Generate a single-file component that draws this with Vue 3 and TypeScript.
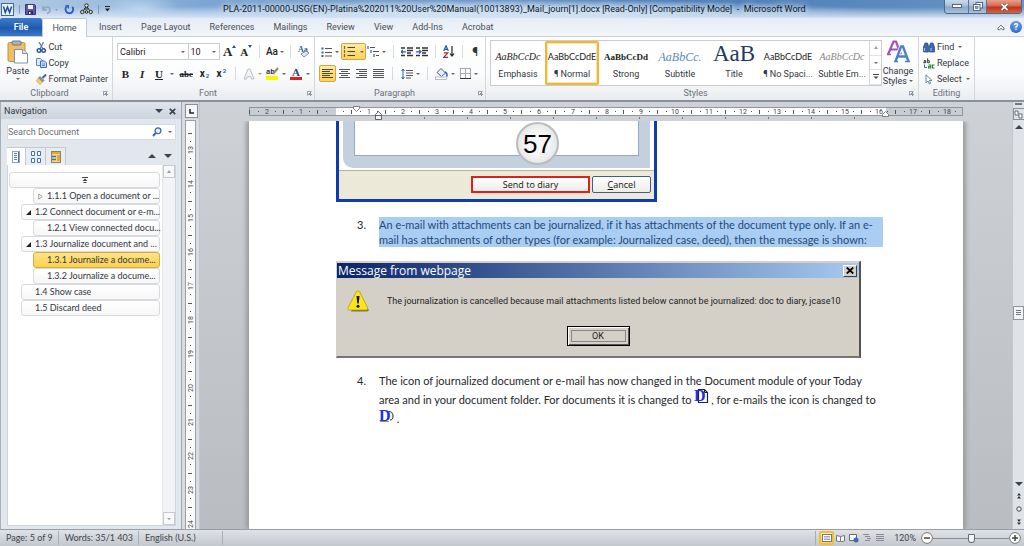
<script setup lang="ts">
import { ref } from 'vue'

interface StyleItem { name: string; sample: string; cls: string }
interface NavItem { text: string; level: number; mark: string }

const tabs: string[] = ['Insert', 'Page Layout', 'References', 'Mailings', 'Review', 'View', 'Add-Ins', 'Acrobat']

const styles: StyleItem[] = [
  { name: 'Emphasis', sample: 'AaBbCcDc', cls: 's-em' },
  { name: '¶ Normal', sample: 'AaBbCcDdE', cls: 's-normal' },
  { name: 'Strong', sample: 'AaBbCcDd', cls: 's-strong' },
  { name: 'Subtitle', sample: 'AaBbCc.', cls: 's-sub' },
  { name: 'Title', sample: 'AaB', cls: 's-title' },
  { name: '¶ No Spaci...', sample: 'AaBbCcDdE', cls: 's-normal' },
  { name: 'Subtle Em...', sample: 'AaBbCcDc', cls: 's-subtle' },
]

const nav: NavItem[] = [
  { text: '1.1.1 Open a document or ...', level: 2, mark: 'closed' },
  { text: '1.2 Connect document or e-m...', level: 1, mark: 'open' },
  { text: '1.2.1 View connected docu...', level: 2, mark: '' },
  { text: '1.3 Journalize document and ...', level: 1, mark: 'open' },
  { text: '1.3.1 Journalize a docume...', level: 2, mark: '' },
  { text: '1.3.2 Journalize a docume...', level: 2, mark: '' },
  { text: '1.4 Show case', level: 1, mark: '' },
  { text: '1.5 Discard deed', level: 1, mark: '' },
]

const current = ref('1.3.1 Journalize a docume...')
const activeStyle = ref('¶ Normal')
const zoomLevel = ref(50)
const search = ref('')

const unit = 34
const origin = 86
const hMarks: number[] = Array.from({ length: 22 }, (_, i) => i - 3)
const vMarks: number[] = Array.from({ length: 12 }, (_, i) => i + 13)
</script>

<template>
  <div class="word">
    <header class="titlebar">
      <div class="quick">
        <svg width="13" height="13" viewBox="0 0 13 13" aria-hidden="true">
          <rect x=".5" y=".5" width="12" height="12" fill="#e9f1fb" stroke="#3a67a8" />
          <path d="M2.5 3.5 4.3 9.5 6.5 4 8.6 9.5 10.6 3.5" fill="none" stroke="#1c4f9c" stroke-width="1.5" />
        </svg>
        <i class="qsep"></i>
        <button type="button" aria-label="Save">
          <svg width="11" height="11" viewBox="0 0 11 11"><path d="M.5.5h9l1 1v9H.5z" fill="#5b55b8" stroke="#3a3787" /><rect x="3" y="1" width="5" height="4" fill="#f2f4fc" /><rect x="3" y="7" width="5" height="3.5" fill="#2f2d63" /><rect x="4" y="8" width="1.5" height="2" fill="#fff" /></svg>
        </button>
        <button type="button" aria-label="Undo" class="undo">
          <svg width="16" height="11" viewBox="0 0 16 11"><path d="M1 2v4h4M1.5 5.5C3 2.500 8 2 8 5.500 8 7.500 6.500 9 5 9.500" fill="none" stroke="#93a5bd" stroke-width="1.600" /><path d="M13 5h3l-1.500 2z" fill="#8a9cb6" /></svg>
        </button>
        <button type="button" aria-label="Repeat">
          <svg width="11" height="11" viewBox="0 0 11 11"><path d="M2.500 2.500C.5 5 2 9.300 5.500 9.300S10 5 8.300 2.800" fill="none" stroke="#2c62c4" stroke-width="1.900" /><path d="M1 1h4v4z" fill="#2c62c4" /></svg>
        </button>
        <button type="button" aria-label="Hierarchy">
          <svg width="13" height="12" viewBox="0 0 13 12"><path d="M6.500 3 3 8M6.500 3 10 8M4.500 6H8" fill="none" stroke="#222" /><circle cx="6.500" cy="2.500" r="1.700" fill="#e8f0d8" stroke="#222" /><circle cx="2.300" cy="9" r="1.700" fill="#dbe8c8" stroke="#222" /><circle cx="6.500" cy="9" r="1.300" fill="#dbe8c8" stroke="#222" /><circle cx="10.700" cy="9" r="1.700" fill="#dbe8c8" stroke="#222" /></svg>
        </button>
        <i class="qsep"></i>
        <button type="button" aria-label="Customize toolbar">
          <svg width="7" height="6" viewBox="0 0 7 6"><path d="M1 .5h5" stroke="#222" /><path d="M1 2.500h5L3.500 5.500z" fill="#222" /></svg>
        </button>
      </div>
      <h1>PLA-2011-00000-USG(EN)-Platina%202011%20User%20Manual(10013893)_Mail_journ[1].docx [Read-Only] [Compatibility Mode]&nbsp; -&nbsp; Microsoft Word</h1>
      <div class="winctl">
        <button type="button" aria-label="Minimize"><svg width="10" height="5" viewBox="0 0 10 5"><rect x=".5" y=".5" width="9" height="3" fill="#fff" stroke="#56657a" /></svg></button>
        <button type="button" aria-label="Restore" class="restore"><svg width="10" height="9" viewBox="0 0 10 9"><rect x="3" y=".5" width="6.500" height="5.500" fill="#fff" stroke="#56657a" /><rect x=".5" y="2.500" width="6.500" height="6" fill="#fff" stroke="#56657a" /><rect x="2.500" y="4.500" width="2.500" height="2" fill="#8ea3bd" stroke="#56657a" stroke-width=".6" /></svg></button>
        <button type="button" aria-label="Close" class="close"><svg width="9" height="8" viewBox="0 0 9 8"><path d="M1.500 1 7.500 7M7.500 1 1.500 7" stroke="#5a3433" stroke-width="3" /><path d="M1.500 1 7.500 7M7.500 1 1.500 7" stroke="#fff" stroke-width="1.800" /></svg></button>
      </div>
    </header>

    <nav class="tabs">
      <button type="button" class="file">File</button>
      <button type="button" class="home">Home</button>
      <div class="rest"><button v-for="t in tabs" :key="t" type="button">{{ t }}</button></div>
      <div class="help">
        <button type="button" aria-label="Collapse ribbon"><svg width="8" height="7" viewBox="0 0 8 7"><path d="M1 4 4 1.200 7 4V5.700H5.500L4 4.400 2.500 5.700H1z" fill="#fff" stroke="#55606e" stroke-width=".9" /></svg></button>
        <button type="button" class="q" aria-label="Help">?</button>
      </div>
    </nav>

    <section class="ribbon">
      <div class="group clip">
        <div class="body">
          <button type="button" class="paste">
            <svg width="22" height="24" viewBox="0 0 22 24"><rect x="1" y="2.500" width="17" height="19" rx="1.500" fill="#f0bd62" stroke="#c98f35" /><rect x="5" y="1" width="9" height="4" rx="1" fill="#a9b2bf" stroke="#6f7886" /><path d="M7.500 9.500h8l5 4v9.500h-13z" fill="#fff" stroke="#7b93b4" /><path d="M15.500 9.500v4h5" fill="#dbe5f2" stroke="#7b93b4" /></svg>
            <span>Paste</span>
            <i class="caret"></i>
          </button>
          <div class="clist">
            <button type="button"><svg width="11" height="11" viewBox="0 0 11 11"><path d="M3 0 7 7M7.500 0 4 7" stroke="#5f7fae" stroke-width="1.300" /><circle cx="3" cy="8.500" r="1.800" fill="none" stroke="#2454a0" stroke-width="1.400" /><circle cx="7.600" cy="8.500" r="1.800" fill="none" stroke="#2454a0" stroke-width="1.400" /></svg>Cut</button>
            <button type="button"><svg width="11" height="10" viewBox="0 0 11 10"><path d="M.5.5h4l2 2v5h-6z" fill="#dce9fb" stroke="#5b86c8" /><path d="M4.500 3h4l2 2v4.500h-6z" fill="#c3dafa" stroke="#3d6dba" /><path d="M6 6h3M6 7.500h3" stroke="#3d6dba" stroke-width=".7" /></svg>Copy</button>
            <button type="button"><svg width="11" height="11" viewBox="0 0 11 11"><path d="M10 .5 6.500 4" stroke="#4a5f86" stroke-width="2" /><path d="M4 2.500 8 6.500 6.500 8 2.500 4z" fill="#7693c4" stroke="#44598a" stroke-width=".6" /><path d="M2.500 4 6.500 8 4 10.500.5 7z" fill="#f6d163" stroke="#b78f2e" stroke-width=".6" /></svg>Format Painter</button>
          </div>
        </div>
        <div class="label"><span>Clipboard</span><i class="launch"></i></div>
      </div>

      <div class="group font">
        <div class="body rows">
          <div class="row">
            <span class="combo c1"><select aria-label="Font"><option>Calibri</option></select><i class="caret"></i></span>
            <span class="combo c2"><select aria-label="Font size"><option>10</option></select><i class="caret"></i></span>
            <button type="button" class="w17 ser big" aria-label="Grow font">A<svg width="4" height="8" viewBox="0 0 4 8"><path d="M0 3 2 0l2 3z" fill="#2d4f8e" /></svg></button>
            <button type="button" class="w17 ser mid" aria-label="Shrink font">A<svg width="4" height="8" viewBox="0 0 4 8"><path d="M0 0h4L2 3z" fill="#2d4f8e" /></svg></button>
            <i class="sep"></i>
            <button type="button" class="w21 aa">Aa<i class="caret"></i></button>
            <i class="sep"></i>
            <button type="button" class="w17" aria-label="Clear formatting"><svg width="13" height="13" viewBox="0 0 13 13"><text x="1" y="7" font-size="8" font-weight="bold" font-family="Liberation Serif, serif" fill="#3a5f96">Aa</text><path d="m4 9 5-3 3 2-5 4z" fill="#e3e8f5" stroke="#6f7fae" stroke-width=".9" /></svg></button>
          </div>
          <div class="row">
            <button type="button" class="w17 ser"><b>B</b></button>
            <button type="button" class="w17 ser"><b><em>I</em></b></button>
            <button type="button" class="w17 ser"><b><u>U</u></b></button>
            <button type="button" class="w9" aria-label="Underline style"><i class="caret"></i></button>
            <button type="button" class="w21 ser small"><b><s>abc</s></b></button>
            <button type="button" class="w17 script"><b>x</b><small class="lo">2</small></button>
            <button type="button" class="w17 script"><b>x</b><small class="hi">2</small></button>
            <i class="sep"></i>
            <button type="button" class="fx" aria-label="Text effects"><svg width="12" height="12" viewBox="0 0 12 12"><path d="M1 11 5 1h2l4 10H8.500l-.8-2.300H4.300L3.500 11z" fill="#f3f4f6" stroke="#b9bec6" /></svg><i class="caret dim"></i></button>
            <button type="button" class="fx" aria-label="Highlight"><svg width="13" height="13" viewBox="0 0 13 13"><text x="0" y="7" font-size="7" font-weight="bold" font-family="Open Sans, sans-serif" fill="#333">ab</text><path d="M12 1 7 7" stroke="#8b8f77" stroke-width="2" /><rect x="0" y="9" width="12" height="4" fill="#fbf500" /></svg><i class="caret"></i></button>
            <button type="button" class="fx" aria-label="Font color"><svg width="13" height="13" viewBox="0 0 13 13"><text x="2" y="9" font-size="11" font-weight="bold" font-family="Liberation Serif, serif" fill="#2c4a86">A</text><rect x="0" y="10" width="12" height="3" fill="#ea1c1c" /></svg><i class="caret"></i></button>
          </div>
        </div>
        <div class="label"><span>Font</span><i class="launch"></i></div>
      </div>

      <div class="group para">
        <div class="body rows">
          <div class="row">
            <button type="button" class="fx" aria-label="Bullets"><svg width="11" height="10" viewBox="0 0 11 10"><path d="M4 1.500h7M4 5.500h7M4 9h7" stroke="#555" /><path d="M.5 1.500h2M.5 5.500h2M.5 9h2" stroke="#2d5fae" stroke-width="1.800" /></svg><i class="caret red"></i></button>
            <button type="button" class="on split" aria-label="Numbering"><svg width="12" height="11" viewBox="0 0 12 11"><path d="M4.500 1.500H12M4.500 5.500H12M4.500 9.500H12" stroke="#444" stroke-width="1.200" /><path d="M1.500 0v3M1.500 4v3M1.500 8v3" stroke="#7a6a3a" stroke-width="1.200" /></svg><i class="caret"></i></button>
            <button type="button" class="fx" aria-label="Multilevel list"><svg width="12" height="12" viewBox="0 0 12 12"><path d="M3 1.500h5M6 5.500h6M9 9.500h3" stroke="#555" /><path d="M1 0v3M4 4v3M7 8v3" stroke="#2d5fae" stroke-width="1.200" /></svg><i class="caret"></i></button>
            <i class="sep"></i>
            <button type="button" class="w17" aria-label="Decrease indent"><svg width="12" height="10" viewBox="0 0 12 10"><path d="M0 1h4M6 1h6M6 3.500h6M6 6h4M0 8.500h4M6 8.500h6" stroke="#333" stroke-width="1.300" /><path d="M0 4.800h5M2 3 0 4.800l2 1.800" fill="none" stroke="#2d5fae" stroke-width="1.200" /></svg></button>
            <button type="button" class="w17" aria-label="Increase indent"><svg width="12" height="10" viewBox="0 0 12 10"><path d="M0 1h4M6 1h6M6 3.500h6M6 6h4M0 8.500h4M6 8.500h6" stroke="#333" stroke-width="1.300" /><path d="M0 4.800h5M3 3l2 1.800-2 1.800" fill="none" stroke="#2d5fae" stroke-width="1.200" /></svg></button>
            <i class="sep"></i>
            <button type="button" class="w17" aria-label="Sort"><svg width="12" height="13" viewBox="0 0 12 13"><path d="M.7 6 3 .8 5.300 6M1.500 4.300h3" fill="none" stroke="#2d4fae" stroke-width="1.200" /><path d="M.8 7.800h4L.8 12.300h4.300" fill="none" stroke="#a52a44" stroke-width="1.200" /><path d="M9 1v10M7 8.500 9 11l2-2.500" fill="none" stroke="#222" stroke-width="1.200" /></svg></button>
            <i class="sep"></i>
            <button type="button" class="w17 pil">¶</button>
          </div>
          <div class="row">
            <button type="button" class="on al" aria-label="Align left"><svg width="11" height="10" viewBox="0 0 11 10"><path d="M0 .5h11M0 2.500h8M0 4.500h11M0 6.500h8M0 8.500h11" stroke="#4d4630" stroke-width="1.200" /></svg></button>
            <button type="button" class="w17" aria-label="Center"><svg width="11" height="10" viewBox="0 0 11 10"><path d="M0 .5h11M2 2.500h7M0 4.500h11M2 6.500h7M0 8.500h11" stroke="#555" /></svg></button>
            <button type="button" class="w17" aria-label="Align right"><svg width="11" height="10" viewBox="0 0 11 10"><path d="M0 .5h11M3 2.500h8M0 4.500h11M3 6.500h8M0 8.500h11" stroke="#555" /></svg></button>
            <button type="button" class="w17" aria-label="Justify"><svg width="11" height="10" viewBox="0 0 11 10"><path d="M0 .5h11M0 2.500h11M0 4.500h11M0 6.500h11M0 8.500h11" stroke="#555" /></svg></button>
            <i class="sep"></i>
            <button type="button" class="fx" aria-label="Line spacing"><svg width="12" height="12" viewBox="0 0 12 12"><path d="M5 2.500h7M5 5h7M5 7.500h7M5 10h5" stroke="#555" /><path d="M2 1v10M.5 3 2 1l1.500 2M.5 9 2 11l1.500-2" fill="none" stroke="#2d5fae" /></svg><i class="caret"></i></button>
            <i class="sep"></i>
            <button type="button" class="fx" aria-label="Shading"><svg width="13" height="13" viewBox="0 0 13 13"><path d="M2 5.500 6 1.500l4.500 4.500-4 3.500z" fill="#e6edf8" stroke="#49628d" /><path d="M10 5c2 1 2.500 3 1.500 4.500" fill="none" stroke="#2d5fae" stroke-width="1.500" /><rect x=".5" y="10" width="11" height="2.500" fill="#fff" stroke="#aab" stroke-width=".8" /></svg><i class="caret"></i></button>
            <button type="button" class="fx" aria-label="Borders"><svg width="11" height="11" viewBox="0 0 11 11"><path d="M.5 0v11M5.500 0v11M10.500 0v11M0 .5h11M0 5.500h11" stroke="#a5a9b0" /><path d="M0 10.500h11" stroke="#333" /></svg><i class="caret"></i></button>
          </div>
        </div>
        <div class="label"><span>Paragraph</span><i class="launch"></i></div>
      </div>

      <div class="group sty">
        <div class="body">
          <div class="gallery">
            <button v-for="s in styles" :key="s.name" type="button" :class="{ active: s.name === activeStyle }" @click="activeStyle = s.name">
              <span class="sample" :class="s.cls">{{ s.sample }}</span>
              <span class="sname">{{ s.name }}</span>
            </button>
            <div class="gscroll">
              <button type="button" aria-label="Previous styles"><i class="caret up dim"></i></button>
              <button type="button" aria-label="Next styles"><i class="caret"></i></button>
              <button type="button" aria-label="More styles"><svg width="6" height="6" viewBox="0 0 6 6"><path d="M0 .5h6" stroke="#444" /><path d="M.5 2.500h5L3 5z" fill="#444" /></svg></button>
            </div>
          </div>
          <button type="button" class="change">
            <svg width="23" height="23" viewBox="0 0 23 23"><path d="M1 14.500 6.500 1.500h2.500l5 13M4 9.500h7.500" fill="none" stroke="#a64fb8" stroke-width="2.200" /><path d="M0 14.500h4M10 14.500h3" stroke="#a64fb8" stroke-width="1.400" /><path d="M8.500 21.500 14 6.500h2l5.500 15M11 16.500h8" fill="none" stroke="#fff" stroke-width="4" /><path d="M8.500 21.500 14 6.500h2l5.500 15M11 16.500h8" fill="none" stroke="#4a82cc" stroke-width="2.400" /><path d="M7 21.500h4M18 21.500h5" stroke="#4a82cc" stroke-width="1.500" /></svg>
            <span>Change</span>
            <span>Styles <i class="caret"></i></span>
          </button>
        </div>
        <div class="label"><span>Styles</span><i class="launch"></i></div>
      </div>

      <div class="group edit">
        <div class="body">
          <div class="clist">
            <button type="button"><svg width="12" height="11" viewBox="0 0 12 11"><path d="M2 1h2.500l1 3v6H.5V5zM7.500 1H10l1.500 4v5h-5V4z" fill="#3b68b0" stroke="#234580" stroke-width=".7" /><path d="M1.500 6v3M8 6v3" stroke="#a9c8f2" /></svg>Find<i class="caret"></i></button>
            <button type="button"><svg width="12" height="11" viewBox="0 0 12 11"><path d="M.8 2.600h2v2.200h-2V3.800h2M4.600.3v4.500h1.700V2.600H4.600" fill="none" stroke="#333" stroke-width=".9" /><path d="M5.500 7h2.300v3H5.500V8.500h2.300M11.500 7H9.500v3h2" fill="none" stroke="#2a8a2a" stroke-width="1.100" /><path d="M1.500 6.500v3h2.500" fill="none" stroke="#3b68b0" /></svg>Replace</button>
            <button type="button"><svg width="12" height="11" viewBox="0 0 12 11"><path d="M3 .8v8l2-1.800 1.300 3 1.300-.6L6.400 6.500H9z" fill="#fff" stroke="#5a78a8" stroke-width=".9" /></svg>Select<i class="caret"></i></button>
          </div>
        </div>
        <div class="label"><span>Editing</span></div>
      </div>
    </section>

    <main class="work">
      <aside class="pane">
        <div class="phead"><h2>Navigation</h2><button type="button" aria-label="Pane options"><i class="tri down"></i></button><button type="button" aria-label="Close pane"><svg width="7" height="7" viewBox="0 0 7 7"><path d="m.8.8 5.400 5.400M6.200.8.8 6.200" stroke="#3c434c" stroke-width="1.700" /></svg></button></div>
        <label class="search">
          <input v-model="search" type="text" placeholder="Search Document" aria-label="Search Document">
          <svg width="10" height="10" viewBox="0 0 10 10"><circle cx="6" cy="3.800" r="2.900" fill="#e4effc" stroke="#3465ad" stroke-width="1.300" /><path d="M3.800 6 1 9" stroke="#3465ad" stroke-width="1.900" /></svg>
          <i class="caret"></i>
        </label>
        <div class="ptabs">
          <button type="button" class="sel" aria-label="Headings"><svg width="8" height="12" viewBox="0 0 8 12"><rect x=".5" y=".5" width="7" height="11" fill="#fff" stroke="#8aa4c8" /><path d="M2 2.500h3M2 4.500h3M2 6.500h3M2 8.500h3" stroke="#5579ad" /><path d="M6.500 1v10" stroke="#5f6b7b" /></svg></button>
          <button type="button" aria-label="Pages"><svg width="10" height="12" viewBox="0 0 10 12"><path d="M.5.5h3v4h-3zM6.500.5h3v4h-3zM.5 7.500h3v4h-3zM6.500 7.500h3v4h-3z" fill="#fff" stroke="#4470b0" /></svg></button>
          <button type="button" aria-label="Results"><svg width="10" height="12" viewBox="0 0 10 12"><rect x=".5" y=".5" width="9" height="11" fill="#f7d98c" stroke="#8a8266" /><path d="M1 2h8" stroke="#e6a82a" stroke-width="2" /><path d="M1 5.500h4M1 8.500h4" stroke="#4470b0" stroke-width="1.500" /><rect x="6" y="4" width="3" height="6" fill="#e9a52c" /></svg></button>
          <span class="grow"></span>
          <button type="button" class="flat" aria-label="Previous heading"><i class="tri"></i></button>
          <button type="button" class="flat" aria-label="Next heading"><i class="tri down"></i></button>
        </div>
        <div class="plist">
          <div class="items">
            <button type="button" class="item top" aria-label="Jump to beginning"><svg width="6" height="6" viewBox="0 0 6 6"><path d="M0 .5h6M1.500 5.500h3" stroke="#444" /><path d="M3 1.500 5.500 4H.5z" fill="#444" /></svg></button>
            <button v-for="n in nav" :key="n.text" type="button" class="item" :class="['l' + n.level, { cur: n.text === current }]" @click="current = n.text">
              <span class="mark"><svg v-if="n.mark === 'closed'" width="5" height="7" viewBox="0 0 5 7"><path d="M.7.8 4.200 3.500.7 6.200z" fill="#fff" stroke="#888" stroke-width=".8" /></svg><svg v-if="n.mark === 'open'" width="5" height="5" viewBox="0 0 5 5"><path d="M5 0v5H0z" fill="#222" /></svg></span>
              <span>{{ n.text }}</span>
            </button>
          </div>
          <div class="pscroll"><i class="sb"><i class="caret up dim"></i></i><i class="sb"><i class="caret dim"></i></i></div>
        </div>
      </aside>

      <div class="vruler">
        <button type="button" class="tabsel" aria-label="Tab selector"><svg width="5" height="5" viewBox="0 0 5 5"><path d="M1 0v4h4" fill="none" stroke="#222" stroke-width="1.500" /></svg></button>
        <div class="vtrack">
          <svg width="9" height="408" viewBox="0 0 9 408" aria-hidden="true">
            <g v-for="m in vMarks" :key="m">
              <text :transform="`translate(7 ${(m - 13) * unit + 29}) rotate(-90)`" class="num" text-anchor="middle">{{ m }}</text>
              <path :d="`M4 ${(m - 13) * unit + 20.500}h1M4 ${(m - 13) * unit + 37.500}h1M2 ${(m - 13) * unit + 12.500}h4`" stroke="#555" />
            </g>
          </svg>
        </div>
      </div>

      <div class="canvas">
        <div class="hruler">
          <svg width="714" height="15" viewBox="0 0 714 15" aria-hidden="true">
            <rect x=".5" y="1.500" width="713" height="8" fill="#c8ccd3" stroke="#8f959f" />
            <rect x="87" y="2" width="550" height="7" fill="#fff" />
            <g v-for="m in hMarks" :key="m">
              <text v-if="m && m > -3" :x="m * unit + origin" y="8" class="num" text-anchor="middle">{{ Math.abs(m) }}</text>
              <path :d="`M${m * unit + origin + 8} 5.500h1M${m * unit + origin + 25} 5.500h1M${m * unit + origin + 16.500} 4v4`" stroke="#555" />
            </g>
            <path d="M175.500 11v2M218.500 11v2M261.500 11v2M304.500 11v2M347.500 11v2M390.500 11v2M433.500 11v2M476.500 11v2M519.500 11v2M562.500 11v2M605.500 11v2" stroke="#777" />
            <path d="M104.500.5h6v2l-3 3-3-3z" fill="#fff" stroke="#666" stroke-width=".8" />
            <path d="M126.500 13.500v-5l3-3 3 3v5zM126.500 9.500h6" fill="#f4f4f4" stroke="#444" stroke-width=".8" />
            <path d="M633.500 10.500v-2l3-3 3 3v2z" fill="#fff" stroke="#666" stroke-width=".8" />
          </svg>
        </div>
        <article class="page">
          <figure class="shot">
            <div class="frame"><div class="inner"></div><b class="badge">57</b></div>
            <div class="actions"><button type="button" class="send">Send to diary</button><button type="button" class="cancel"><u>C</u>ancel</button></div>
          </figure>

          <div class="step three">
            <span class="no">3.</span>
            <p><mark>An e-mail with attachments can be journalized, if it has attachments of the document type only. If an e-</mark><br><mark>mail has attachments of other types (for example: Journalized case, deed), then the message is shown:&nbsp;</mark></p>
          </div>

          <div class="msg">
            <div class="mtitle"><span>Message from webpage</span><button type="button" aria-label="Close message"><svg width="8" height="7" viewBox="0 0 8 7"><path d="m.8.5 6.400 6M7.200.5.8 6.500" stroke="#000" stroke-width="1.800" /></svg></button></div>
            <div class="mbody">
              <svg width="23" height="22" viewBox="0 0 23 22"><path d="M12.500 2.500 22 20.500l-2 1H4z" fill="#77745f" /><path d="M11 .8c.8 0 1.400.4 1.800 1.200l7.700 15.500c.6 1.400 0 2.500-1.500 2.500H2.500C1 20 .5 18.900 1.200 17.500L9.200 2C9.600 1.200 10.200.8 11 .8z" fill="#fbe417" stroke="#a8980c" stroke-width=".7" /><path d="M9.500 6h3l-.8 7.500h-1.400z" fill="#111" /><circle cx="11" cy="16.200" r="1.500" fill="#111" /></svg>
              <span>The journalization is cancelled because mail attachments listed below cannot be journalized: doc to diary, jcase10</span>
            </div>
            <div class="mfoot"><button type="button">OK</button></div>
          </div>

          <div class="step four">
            <span class="no">4.</span>
            <p>The icon of journalized document or e-mail has now changed in the Document module of your Today<br>area and in your document folder. For documents it is changed to <svg width="14" height="16" viewBox="0 0 14 16"><path d="M4.500 1.500h6l3 3v10h-9z" fill="#fff" stroke="#222" stroke-width="1.200" /><path d="M10.500 1.500v3h3" fill="none" stroke="#222" /><text x="0" y="13" class="dee">D</text></svg> , for e-mails the icon is changed to<br><svg width="15" height="14" viewBox="0 0 15 14"><path d="M9.500 2.500c3 0 4.500 2 4.500 4.500s-1 4-3 4" fill="none" stroke="#222" /><path d="M12 2.500 14 5M1 12.500h9" stroke="#777" stroke-width=".8" /><text x="0" y="12" class="dee">D</text></svg> .</p>
          </div>
        </article>
      </div>

      <div class="vscroll">
        <div class="vtop"><i class="splitbar"></i><button type="button" aria-label="View ruler"><svg width="9" height="9" viewBox="0 0 9 9"><path d="M1 1h3v3h4v4H5V5H1z" fill="#fff" stroke="#59616c" stroke-width=".9" /></svg></button><i class="tri"></i></div>
        <div class="thumb"><i></i><i></i><i></i></div>
        <div class="vbot"><i class="tri down"></i><svg width="6" height="6" viewBox="0 0 6 6"><path d="M3 0 5 2.500H1zM3 3l2 2.500H1z" fill="#333" /></svg><svg width="6" height="6" viewBox="0 0 6 6"><circle cx="3" cy="3" r="2.200" fill="#f4f6f8" stroke="#444" /></svg><svg width="6" height="6" viewBox="0 0 6 6"><path d="M3 3 5 .5H1zM3 6l2-2.500H1z" fill="#333" /></svg></div>
      </div>
    </main>

    <footer class="status">
      <span>Page: 5 of 9</span><span>Words: 35/1 403</span><span class="lang">English (U.S.)</span>
      <div class="right">
        <button type="button" class="on" aria-label="Print layout"><svg width="10" height="8" viewBox="0 0 10 8"><rect x=".5" y=".5" width="9" height="7" fill="#fff" stroke="#777" /><path d="M2 2.500h6M2 4h6M2 5.500h6" stroke="#8693a8" stroke-width=".8" /></svg></button>
        <button type="button" aria-label="Full screen reading"><svg width="9" height="8" viewBox="0 0 9 8"><path d="M.5 1.500 4.500 2.500l4-1v5.500l-4 .7-4-.7zM4.500 2.500V7.500" fill="#fff" stroke="#667" stroke-width=".9" /></svg></button>
        <button type="button" aria-label="Web layout"><svg width="10" height="9" viewBox="0 0 10 9"><path d="M.5.5h7v6h-7z" fill="#fff" stroke="#667" /><circle cx="7" cy="6" r="2.500" fill="#3d6cb0" /></svg></button>
        <button type="button" aria-label="Outline"><svg width="8" height="8" viewBox="0 0 8 8"><path d="M0 .5h6M2 2.500h5M4 4.500h4M2 6.500h5" stroke="#889" /></svg></button>
        <button type="button" aria-label="Draft"><svg width="8" height="8" viewBox="0 0 8 8"><path d="M0 .5h8M0 2.500h8M0 4.500h8M0 6.500h8" stroke="#889" /></svg></button>
        <span class="pct">120%</span>
        <button type="button" class="round" aria-label="Zoom out"><svg width="12" height="12" viewBox="0 0 12 12"><circle cx="6" cy="6" r="5.400" fill="#fff" stroke="#777" /><path d="M3 6h6" stroke="#444" stroke-width="1.500" /></svg></button>
        <input v-model="zoomLevel" type="range" min="0" max="100" aria-label="Zoom">
        <button type="button" class="round" aria-label="Zoom in"><svg width="12" height="12" viewBox="0 0 12 12"><circle cx="6" cy="6" r="5.400" fill="#fff" stroke="#777" /><path d="M3 6h6M6 3v6" stroke="#444" stroke-width="1.500" /></svg></button>
      </div>
    </footer>
  </div>
</template>

<style>
html, body, #app { height: 100%; }
body { margin: 0; overflow: hidden; }
</style>

<style scoped>
.word { height: 100%; display: flex; flex-direction: column; font: 9px/12px Roboto, "Open Sans", sans-serif; color: #33373d; background: #c9ccd1; overflow: hidden; }
.word * { box-sizing: border-box; }
button { border: 0; padding: 0; margin: 0; background: none; font: inherit; color: inherit; display: flex; align-items: center; justify-content: center; white-space: nowrap; }
svg { display: block; flex: none; overflow: hidden; }
i { font-style: normal; }
h1, h2, p, figure { margin: 0; font: inherit; }
.caret { width: 0; height: 0; border: 2px solid transparent; border-top: 2px solid #666; border-bottom: 0; flex: none; display: inline-block; vertical-align: 2px; }
.caret.up { border-top: 0; border-bottom: 3px solid #555; }
.caret.dim { border-top-color: #9aa0a8; }
.caret.up.dim { border-bottom-color: #9aa0a8; }
.tri { width: 0; height: 0; border: 4px solid transparent; border-bottom: 4px solid #3c434c; border-top: 0; }
.tri.down { border-top: 4px solid #3c434c; border-bottom: 0; }

.titlebar { height: 18px; flex: none; display: flex; align-items: center; position: relative; background: radial-gradient(ellipse 40px 14px at 140px 9px, rgba(196, 220, 244, .8), transparent), radial-gradient(ellipse 380px 12px at 50% 12px, rgba(214, 230, 247, .75) 30%, transparent), linear-gradient(to bottom, rgba(255, 255, 255, 0) 40%, rgba(226, 236, 247, .9)), linear-gradient(to right, #b4cbe4 0, #9dbcdc 110px, #7ba5d3 20%, #6c99ca 45%, #4b7db8 70%, #6a95c6 100%); }
.quick { display: flex; align-items: center; padding-left: 1px; gap: 5px; width: 223px; height: 15px; }
.undo { margin: 0 1px; }
.qsep { width: 1px; height: 9px; background: #7e9abc; }
h1 { flex: 1; font-size: 9px; line-height: 17px; color: #10151c; white-space: nowrap; text-shadow: 0 0 6px #e3eefa, 0 0 8px #e3eefa; }
.winctl { display: flex; align-self: flex-start; height: 14px; margin-right: 2px; border: 1px solid #4d6788; border-top: 0; border-radius: 0 0 4px 4px; overflow: hidden; }
.winctl button { width: 24px; border-right: 1px solid #5a7495; background: linear-gradient(#cbdaea, #a4bcd6 48%, #87a5c7 52%, #a9c2dc); }
.winctl .restore { width: 18px; }
.winctl .close { width: 34px; border: 0; background: linear-gradient(#e7a08e, #d5664c 48%, #bf3217 52%, #d4633f); }

.tabs { height: 19px; flex: none; display: flex; align-items: stretch; background: linear-gradient(#e4ecf6, #f3f6fa); border-bottom: 1px solid #c9ced6; color: #4a4f57; }
.file { width: 42px; color: #fff; font-weight: 600; background: linear-gradient(#3f7ac9, #2160b5 50%, #1d57a8 51%, #3a78cc); border-radius: 2px 2px 0 0; }
.home { width: 45px; background: #fff; border: 1px solid #c3c9d2; border-bottom: 0; border-radius: 2px 2px 0 0; margin-bottom: -1px; }
.rest { display: flex; gap: 19px; margin-left: 12px; flex: 1; }
.help { display: flex; align-items: center; gap: 5px; padding-right: 2px; }
.q { width: 12px; height: 12px; border-radius: 50%; background: radial-gradient(circle at 50% 30%, #6fa4ea, #1f5ec0); color: #fff; font-weight: 700; font-size: 9px; line-height: 12px; }

.ribbon { height: 65px; flex: none; display: flex; background: linear-gradient(#fff, #fbfcfd 60%, #e9ecf0); border-bottom: 2px solid #8b9098; }
.group { display: flex; flex-direction: column; border-right: 1px solid #d3d7dc; flex: none; padding: 2px 4px 0; }
.body { flex: 1; display: flex; }
.label { height: 13px; display: flex; align-items: center; color: #6a7079; padding-bottom: 1px; }
.label span { flex: 1; text-align: center; padding-right: 8px; }
.edit .label span { padding: 0; }
.launch { width: 5px; height: 5px; border: 1px solid #9aa0a8; border-right-color: transparent; border-bottom-color: transparent; background: linear-gradient(135deg, transparent 50%, #8d939b 50%); }
.clip { width: 113px; } .font { width: 202px; padding-right: 2px; } .para { width: 171px; padding-right: 2px; } .sty { width: 433px; } .edit { width: 56px; }
.paste { flex-direction: column; justify-content: flex-start; width: 29px; gap: 2px; padding-top: 1px; margin-right: 4px; }
.paste span { line-height: 10px; }
.clist { display: flex; flex-direction: column; }
.clist button { height: 16px; gap: 2px; justify-content: flex-start; }
.clist .caret { margin-left: 2px; }
.rows { flex-direction: column; padding-top: 4px; gap: 5px; }
.row { display: flex; align-items: center; height: 17px; }
.combo { position: relative; display: flex; align-items: center; height: 17px; border: 1px solid #c9cdd3; background: #fff; padding-right: 3px; }
.combo select { appearance: none; border: 0; background: none; font: inherit; font-size: 9px; padding: 0 0 0 2px; color: #222; flex: 1; min-width: 0; height: 15px; }
.c1 { width: 74px; } .c2 { width: 32px; border-left: 0; margin-right: 2px; }
.w17 { width: 17px; height: 17px; } .w9 { width: 9px; height: 17px; } .w21 { width: 20px; height: 17px; gap: 2px; }
.fx { width: 24px; height: 17px; gap: 3px; }
.ser { font-family: "Liberation Serif", serif; font-size: 11px; color: #222; }
.big { font-size: 13px; font-weight: 700; } .mid { font-size: 11px; font-weight: 700; }
.ser svg { align-self: flex-start; margin-top: 2px; }
.small { font-size: 9px; color: #222; }
.script { font-size: 10px; color: #222; gap: 1px; }
.script small { font-size: 6px; line-height: 6px; color: #2d5fae; font-weight: 700; }
.lo { align-self: flex-end; margin-bottom: 3px; } .hi { align-self: flex-start; margin-top: 3px; }
.aa { font-weight: 500; font-size: 10px; color: #222; }
.pil { font-size: 12px; color: #333; }
.sep { width: 1px; height: 13px; background: #d6d9de; margin: 0 5px; }
.on { background: linear-gradient(#fde9a0, #fbd35c); border: 1px solid #d3a53c; border-radius: 2px; }
.split { width: 27px; height: 17px; gap: 5px; }
.al { width: 17px; height: 17px; }
.red { border-top-color: #a04050; }
.gallery { display: flex; border: 1px solid #c9cdd3; height: 46px; margin-top: 1px; background: #fff; }
.gallery > button { width: 54px; flex-direction: column; overflow: hidden; border: 2px solid transparent; }
.gallery > button.active { border-color: #eeb73c; border-radius: 2px; box-shadow: inset 0 0 0 1px #fbe6a0; }
.sample { height: 22px; line-height: 22px; color: #1b1b1b; display: block; }
.sname { display: block; line-height: 12px; }
.s-em { font: italic 10px/22px "Liberation Serif", serif; }
.s-normal { font: 9px/22px Lato, "Open Sans", sans-serif; }
.s-strong { font: bold 9px/22px "Liberation Serif", serif; }
.s-sub { font: italic 12px/22px "Liberation Serif", serif; color: #5b87bf; }
.s-title { font: 23px/16px "Liberation Serif", serif; color: #1f3a5f; }
.s-subtle { font: italic 10px/22px "Liberation Serif", serif; color: #888; }
.gscroll { width: 12px; display: flex; flex-direction: column; border-left: 1px solid #d3d7dc; }
.gscroll button { flex: 1; border-bottom: 1px solid #dde0e4; }
.change { flex-direction: column; justify-content: flex-start; width: 36px; padding-top: 1px; line-height: 10px; }
.change svg { margin-bottom: 3px; }

.work { flex: 1; min-height: 0; display: flex; background: linear-gradient(#ced1d6, #b9bcc1); }
.pane { width: 182px; display: flex; flex-direction: column; background: #e2e7ee; padding: 0 5px 3px 6px; border-left: 1px solid #aab0b9; border-right: 1px solid #9fa6b1; }
.phead { margin: 1px -5px 5px -6px; height: 16px; display: flex; align-items: center; gap: 6px; padding: 0 5px 0 3px; background: linear-gradient(#dfe4ea, #cdd4dd); }
.phead h2 { flex: 1; }
.search { display: flex; align-items: center; gap: 6px; height: 16px; background: #fff; border: 1px solid #d4dae2; padding-right: 3px; }
.search input { flex: 1; min-width: 0; border: 0; outline: 0; background: none; padding: 0; font: inherit; }
.search input::placeholder { color: #6b7178; opacity: 1; }
.ptabs { display: flex; margin-top: 7px; height: 18px; }
.ptabs button { width: 20px; border: 1px solid #c3cad4; border-left: 0; border-bottom: 0; background: #e9edf2; }
.ptabs .sel { background: #fff; width: 19px; }
.ptabs .flat { border: 0; background: none; width: 16px; }
.grow { flex: 1; }
.plist { flex: 1; min-height: 0; display: flex; background: #fff; border: 1px solid #cdd4de; border-top: 0; }
.items { flex: 1; min-width: 0; padding: 7px 2px 0 1px; display: flex; flex-direction: column; font-family: Lato, "Open Sans", sans-serif; }
.item { height: 16px; border: 1px solid #d7dade; border-radius: 3px; background: linear-gradient(#fff, #f7f7f8); justify-content: flex-start; color: #33373d; flex: none; }
.item.top { justify-content: center; }
.l1 { margin-left: 12px; } .l2 { margin-left: 24px; }
.mark { width: 13px; display: flex; justify-content: center; flex: none; }
.cur { background: linear-gradient(#fde48a, #fbd14f); border-color: #dba937; }
.pscroll { width: 13px; display: flex; flex-direction: column; justify-content: space-between; background: #f2f3f5; border-left: 1px solid #e3e5e8; flex: none; }
.sb { height: 13px; border: 1px solid #c6cbd2; background: #f7f8fa; display: flex; align-items: center; justify-content: center; }

.vruler { width: 18px; display: flex; flex-direction: column; padding: 2px 2px 0 3px; background: #d8dbe0; border-right: 1px solid #c2c6cc; }
.tabsel { height: 14px; width: 13px; border: 1px solid #8a9099; background: #f5f6f8; flex: none; box-shadow: 0 0 0 1px #d4d8dd; }
.vtrack { margin-top: 2px; flex: 1; overflow: hidden; background: #fbfbfc; border: 1px solid #9aa0a9; border-bottom: 0; width: 11px; }
.num { font: 7px Roboto, "Open Sans", sans-serif; fill: #444; }
.canvas { flex: 1; min-width: 0; display: flex; flex-direction: column; align-items: center; overflow: hidden; }
.hruler { padding: 4px 0 0; height: 19px; flex: none; }
.page { width: 714px; flex: 1; min-height: 0; background: #fff; padding: 0 60px 0 88px; box-shadow: -3px 0 4px #999da3, 3px 0 4px #999da3; overflow: hidden; color: #26282b; clip-path: inset(0 -8px); }
.shot { width: 321px; height: 81px; border: solid #0d3bb0; border-width: 0 3px 3px 3px; background: #ece9d8; }
.frame { height: 50px; background: #fff; border-bottom: 1px solid #b5b5a4; padding: 0 4px 3px; position: relative; }
.frame::before { content: ""; display: block; height: 47px; background: #c5d0de; border-radius: 0 0 0 10px; }
.inner { position: absolute; left: 15px; right: 15px; top: 0; height: 35px; background: #fff; border: 1px solid #93a9c4; border-top: 0; }
.badge { position: absolute; left: 177px; top: 1px; width: 43px; height: 43px; border-radius: 50%; border: 2px solid #b9bcc0; background: radial-gradient(circle, #f6f6f6 40%, #d9dbdd); font: 26px/40px "Liberation Sans", Arial, sans-serif; text-align: center; color: #000; }
.actions { display: flex; justify-content: flex-end; align-items: center; gap: 2px; height: 27px; padding-right: 3px; font: 9px/12px "Open Sans", sans-serif; color: #111; }
.send { width: 119px; height: 17px; border: 2px solid #e02020; background: linear-gradient(#fff, #ecebe6); }
.cancel { width: 59px; height: 17px; border: 1px solid #3d5f8f; border-radius: 2px; background: linear-gradient(#fff, #ecebe6); }
.shot, .msg { margin-left: -1px; }
.step { display: flex; padding-left: 20px; font: 11px/15px Lato, "Open Sans", sans-serif; white-space: nowrap; }
.no { width: 22px; flex: none; }
.three { margin-top: 15px; }
mark { background: #a9cdf3; color: #234a78; padding: 0; display: inline-block; height: 15px; min-width: 504px; }
.msg { margin-top: 14px; width: 525px; height: 97px; background: #d4d0c8; border: 1px solid #d4d0c8; border-right: 2px solid #55534f; border-bottom: 2px solid #77746e; font-size: 9px; color: #222; }
.mtitle { height: 15px; margin: 1px 0; display: flex; align-items: center; padding: 0 2px 0 1px; background: linear-gradient(to right, #0a246a, #a6caf0); color: #fff; font: 12px/15px "Open Sans", sans-serif; }
.mtitle span { flex: 1; }
.mtitle button { width: 14px; height: 12px; background: #d4d0c8; border: 1px solid #fff; border-right-color: #404040; border-bottom-color: #404040; }
.mbody { display: flex; align-items: center; padding: 10px 0 0 10px; gap: 17px; height: 33px; white-space: nowrap; }
.mfoot { display: flex; justify-content: center; margin-top: 14px; }
.mfoot button { width: 63px; height: 20px; border: 1px solid #000; background: #d4d0c8; box-shadow: inset 1px 1px 0 #fff, inset -1px -1px 0 #555, inset 0 0 0 3px #d4d0c8, inset 0 0 0 4px #8a8781; }
.four { margin-top: 13px; line-height: 19px; }
.four svg { display: inline-block; vertical-align: 0; margin-top: -4px; overflow: visible; }
.dee { font: bold 16px "Liberation Serif", serif; fill: #1a2ff0; }

.vscroll { width: 12px; display: flex; flex-direction: column; justify-content: space-between; align-items: center; background: #dfe3e8; border-left: 1px solid #c3c8cf; }
.vtop, .vbot { display: flex; flex-direction: column; align-items: center; gap: 3px; }
.splitbar { width: 7px; height: 2px; background: #777; margin-top: 1px; }
.vtop button { width: 12px; height: 12px; border: 1px solid #8a9099; }
.vtop .tri { margin-top: 2px; }
.thumb { width: 11px; height: 14px; border: 1px solid #8d949e; background: #f2f4f7; display: flex; flex-direction: column; gap: 1px; justify-content: center; align-items: center; margin-top: 14px; }
.thumb i { width: 5px; height: 1px; background: #777; }
.vbot { gap: 7px; padding-bottom: 4px; }

.status { height: 17px; flex: none; display: flex; align-items: center; background: linear-gradient(#dfe2e6, #c3c8ce); border-top: 1px solid #989da5; color: #3f444b; }
.status > span { padding: 0 5px 0 6px; border-right: 1px solid #a9aeb6; line-height: 14px; font-family: Lato, "Open Sans", sans-serif; }
.status .lang { width: 84px; }
.right { margin-left: auto; display: flex; align-items: center; padding-right: 3px; border-left: 1px solid #a9aeb6; padding-left: 3px; }
.right button { width: 13px; height: 13px; }
.right .on { width: 15px; height: 14px; border-width: 2px; border-color: #eebf3e; }
.pct { margin: 0 5px 0 8px; }
.right .round { width: 12px; }
input[type="range"] { appearance: none; width: 76px; height: 12px; margin: 0; background: linear-gradient(#868c95, #868c95) center / 100% 1px no-repeat; }
input[type="range"]::-webkit-slider-thumb { appearance: none; width: 7px; height: 9px; background: #f4f5f7; border: 1px solid #666c75; border-radius: 1px 1px 4px 4px; }
</style>
